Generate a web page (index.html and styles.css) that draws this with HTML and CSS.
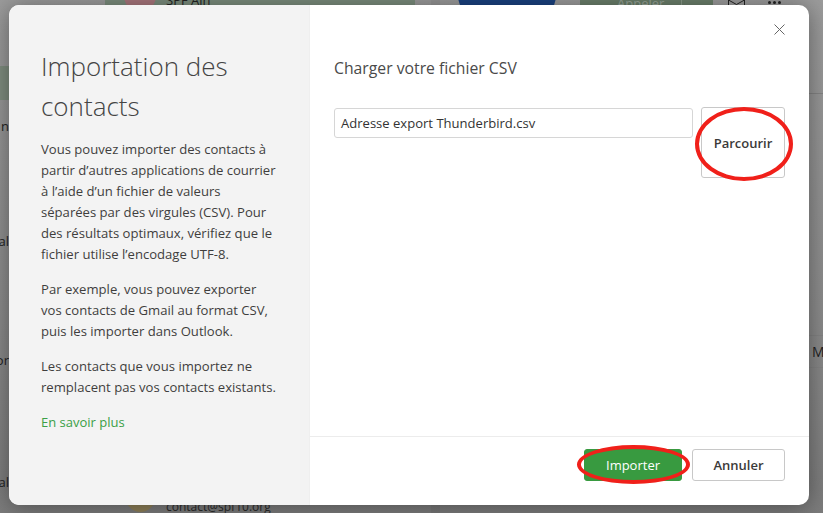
FILE: index.html
```html
<!DOCTYPE html>
<html lang="fr">
<head>
<meta charset="utf-8">
<title>Importation des contacts</title>
<link rel="stylesheet" href="styles.css">
</head>
<body>
<div class="page">
  <div class="nav">
    <div class="nav-band"></div>
    <div class="nav-row nav-row-1">n</div>
    <div class="nav-row nav-row-2">al</div>
    <div class="nav-row nav-row-3">or</div>
    <div class="nav-row nav-row-4">al</div>
  </div>
  <div class="list">
    <div class="item-top"><span class="avatar-red"></span><span class="item-name">SPF Ain</span></div>
    <div class="item-bottom"><span class="avatar-tan"></span><span class="item-mail">contact@spf10.org</span></div>
  </div>
  <div class="detail">
    <div class="detail-top">
      <span class="logo-blue">SPF</span>
      <span class="call-group"><span class="call">Appeler</span><span class="call-arrow"></span></span>
      <svg class="mail" width="17" height="5" viewBox="0 0 17 5"><path d="M.5 5V0l8 4.5 8-4.5v5" fill="none" stroke="#222" stroke-width="1"/></svg>
      <span class="dots"><i></i><i></i><i></i></span>
    </div>
    <div class="rule rule-1"></div>
    <div class="rule rule-2"></div>
    <div class="tab-m">M</div>
  </div>
</div>

<div class="modal">
  <aside class="side">
    <h1 class="side-title">Importation des contacts</h1>
    <p>Vous pouvez importer des contacts à partir d’autres applications de courrier à l’aide d’un fichier de valeurs séparées par des virgules (CSV). Pour des résultats optimaux, vérifiez que le fichier utilise l’encodage UTF-8.</p>
    <p>Par exemple, vous pouvez exporter vos contacts de Gmail au format CSV, puis les importer dans Outlook.</p>
    <p>Les contacts que vous importez ne remplacent pas vos contacts existants.</p>
    <a class="more" href="#">En savoir plus</a>
  </aside>
  <section class="main">
    <div class="main-body">
      <div class="close-row">
        <svg class="close" width="11" height="11" viewBox="0 0 11 11"><path d="M.5.5l10 10M10.5.5l-10 10" fill="none" stroke="#666" stroke-width="1"/></svg>
      </div>
      <h2 class="main-title">Charger votre fichier CSV</h2>
      <div class="file-row">
        <div class="file-input">Adresse export Thunderbird.csv</div>
        <button class="btn btn-browse" type="button">Parcourir</button>
      </div>
    </div>
    <div class="footer">
      <button class="btn btn-primary" type="button">Importer</button>
      <button class="btn btn-cancel" type="button">Annuler</button>
    </div>
  </section>
</div>
</body>
</html>
```
FILE: styles.css
```css
* { box-sizing: border-box; }
html, body { margin: 0; height: 100%; }
body {
  width: 823px;
  height: 513px;
  overflow: hidden;
  font-family: "Open Sans", "Noto Sans", sans-serif;
  color: #3b3a39;
  position: relative;
  background: #8e8e8e;
}

/* page behind the dialog */
.page {
  display: flex;
  height: 513px;
  overflow: hidden;
  background: linear-gradient(#9c9c9c, #8c8c8c 60%, #7c7c7c);
  color: #1f1f1f;
  font-size: 13px;
}
.nav { width: 105px; flex: none; }
.nav-band { height: 34px; margin-top: 66px; background: #7f8d7f; }
.nav-row { width: 9px; overflow: hidden; line-height: 18px; display: flex; justify-content: flex-end; }
.nav-row-1 { margin-top: 17px; }
.nav-row-2 { margin-top: 97px; }
.nav-row-3 { margin-top: 101px; }
.nav-row-4 { margin-top: 104px; }

.list {
  width: 335px;
  flex: none;
  display: flex;
  flex-direction: column;
  justify-content: space-between;
  border-right: 9px solid rgba(0, 0, 0, .04);
}
.item-top { height: 5px; width: 310px; background: #7b8d7d; display: flex; gap: 10px; padding-left: 19px; }
.avatar-red { width: 32px; height: 32px; border-radius: 50%; background: #a8767c; flex: none; margin-top: -20px; }
.item-name { line-height: 14px; margin-top: -7px; color: #222; }
.item-bottom { height: 20px; display: flex; gap: 11px; padding-left: 21px; }
.avatar-tan { width: 29px; height: 29px; border-radius: 50%; background: #8f8058; flex: none; margin-top: -10px; }
.item-mail { line-height: 14px; margin-top: 7px; font-size: 12px; color: #2a2a2a; }

.detail { flex: 1; display: flex; flex-direction: column; }
.detail-top { height: 5px; display: flex; padding-left: 17px; }
.logo-blue {
  width: 100px;
  height: 100px;
  border-radius: 50%;
  background: #1a4280;
  flex: none;
  margin-top: -62px;
  color: #e8e8e8;
  font-size: 22px;
  font-weight: 700;
  line-height: 28px;
  text-align: center;
  padding-top: 37px;
}
.call-group { display: flex; margin-left: 23px; height: 5px; width: 133px; background: #6b7f6b; }
.call { width: 101px; height: 5px; overflow: hidden; padding-left: 37px; line-height: 6px; color: #9aa69a; }
.call-arrow { flex: 1; border-left: 1px solid #8a9a8a; }
.mail { margin-left: 15px; flex: none; }
.dots { display: flex; gap: 2px; margin-left: 23px; align-items: flex-start; padding-top: 1px; height: 5px; }
.dots i { width: 3px; height: 3px; background: #222; border-radius: 50%; }
.rule { height: 1px; background: #838383; }
.rule-1 { margin-top: 88px; }
.rule-2 { margin-top: 241px; }
.tab-m { height: 32px; line-height: 32px; padding-left: 372px; font-size: 14px; border-bottom: 1px solid #838383; white-space: nowrap; }

/* dialog */
.modal {
  position: absolute;
  left: 9px;
  top: 5px;
  width: 800px;
  height: 500px;
  display: flex;
  background: #fff;
  border-radius: 10px;
  overflow: hidden;
  box-shadow: 0 2px 24px rgba(0, 0, 0, .4);
}
.side {
  width: 301px;
  flex: none;
  background: #f3f3f3;
  border-right: 1px solid #efefef;
  padding: 41px 32px 0;
  font-size: 13.1px;
  line-height: 21px;
  color: #3f3e3d;
}
.side-title {
  margin: 0 0 13px;
  font-size: 26px;
  line-height: 40px;
  font-weight: 300;
  color: #444;
}
.side p { margin: 0 0 14px; }
.more { display: block; margin-top: 14px; font-size: 13px; color: #3a9f47; text-decoration: none; }

.main { flex: 1; display: flex; flex-direction: column; min-width: 0; }
.main-body { flex: 1; padding: 0 24px; }
.close-row { display: flex; justify-content: flex-end; padding-top: 19px; height: 53px; }
.main-title {
  margin: 0;
  font-size: 15.75px;
  line-height: 20px;
  font-weight: 400;
  color: #4a4a4a;
}
.file-row { display: flex; gap: 8px; margin-top: 29px; align-items: flex-start; }
.file-input {
  width: 359px;
  height: 30px;
  margin-top: 1px;
  padding: 0 6px;
  border: 1px solid #d6d6d6;
  border-radius: 3px;
  font-size: 13.05px;
  line-height: 28px;
  color: #333;
}
.btn {
  position: relative;
  font-family: inherit;
  font-size: 13px;
  font-weight: 600;
  border-radius: 3px;
  padding: 0;
  color: #3b3a39;
  background: #fff;
  border: 1px solid #c8c8c8;
}
.btn-browse { width: 84px; height: 71px; }
.btn-browse::after {
  content: "";
  box-sizing: border-box;
  position: absolute;
  left: -7px;
  top: -1px;
  width: 98px;
  height: 74px;
  border: 4px solid #f0201a;
  border-radius: 50%;
}
.footer {
  height: 69px;
  flex: none;
  border-top: 1px solid #ececec;
  padding: 12px 24px 0 0;
  display: flex;
  justify-content: flex-end;
  align-items: flex-start;
  gap: 10px;
}
.btn-primary { width: 98px; height: 32px; background: #389a40; border-color: #389a40; color: #fff; font-weight: 500; }
.btn-primary::after {
  content: "";
  box-sizing: border-box;
  position: absolute;
  left: -8px;
  top: -5px;
  width: 113px;
  height: 39px;
  border: 4px solid #f0201a;
  border-radius: 50%;
}
.btn-cancel { width: 93px; height: 32px; }
```
